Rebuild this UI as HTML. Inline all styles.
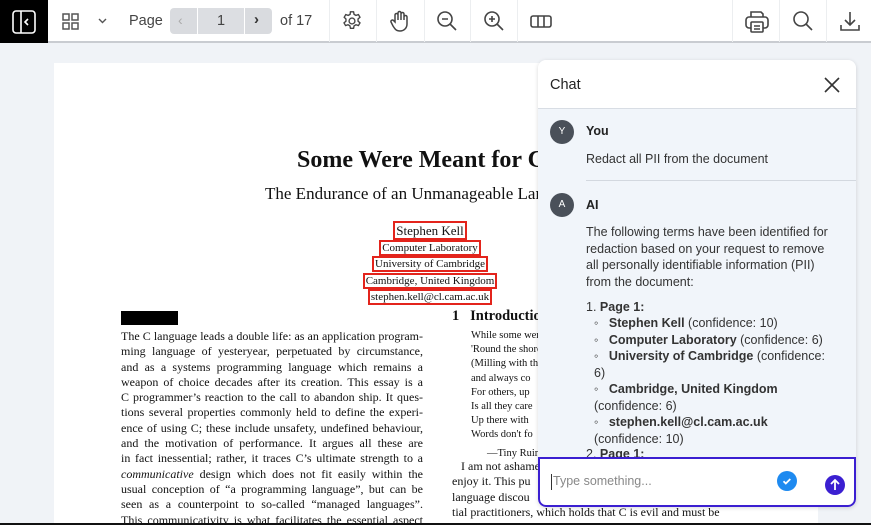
<!DOCTYPE html>
<html><head><meta charset="utf-8"><style>
*{box-sizing:border-box;margin:0;padding:0}
html,body{width:871px;height:525px;overflow:hidden}
body{background:#f0f3f7;font-family:"Liberation Sans",sans-serif;position:relative}
.tb{position:absolute;left:0;top:0;width:871px;height:43px;background:#fff;border-bottom:2px solid #c9ccd1}
.sb{position:absolute;left:0;top:0;width:48px;height:43px;background:#000}
.ic{position:absolute;top:9px}
.sep{position:absolute;top:0;width:1px;height:42px;background:#eceef0}
.pg{position:absolute;left:54px;top:63px;width:764px;height:460px;background:#fff;overflow:hidden}
.serif{font-family:"Liberation Serif",serif;color:#111;position:absolute}
.red{border:2px solid #e3241c;padding:0 1px}
.lc div{font-size:12px;line-height:15.3px;height:15.3px;text-align:justify;text-align-last:justify;white-space:nowrap;overflow:hidden}
.chat{position:absolute;left:538px;top:60px;width:318px;height:447px;background:#f1f5fa;border-radius:8px;box-shadow:0 1px 4px rgba(0,0,0,.15);overflow:hidden;font-size:12.5px;color:#333}
.hd{height:49px;background:#fff;border-bottom:1px solid #d8dde4;padding:17px 12px;font-size:14.5px;color:#222}
.av{position:absolute;width:24px;height:24px;border-radius:12px;background:#4a5059;color:#fff;font-size:10px;text-align:center;line-height:24px}
.nm{position:absolute;font-weight:bold;font-size:12.5px;color:#222}
.t{position:absolute;left:48px;line-height:16.5px;width:268px;white-space:nowrap}
.inp{position:absolute;left:0;top:397px;width:318px;height:50px;background:#fff;border:2px solid #3b1fd1;border-radius:0 0 8px 8px}
</style></head><body>
<div class="tb">
<div class="sb"><svg class="ic" style="left:12px;top:10px" width="24" height="24" viewBox="0 0 24 24" fill="none" stroke="#fff" stroke-width="1.6"><rect x="1" y="1" width="22" height="22" rx="3"/><line x1="9" y1="1" x2="9" y2="23"/><path d="M16 9l-3 3 3 3"/></svg></div>
<svg class="ic" style="left:62px;top:13px" width="17" height="17" viewBox="0 0 17 17" fill="none" stroke="#555" stroke-width="1.5"><rect x="1" y="1" width="6" height="6"/><rect x="10" y="1" width="6" height="6"/><rect x="1" y="10" width="6" height="6"/><rect x="10" y="10" width="6" height="6"/></svg>
<svg class="ic" style="left:98px;top:18px" width="9" height="6" viewBox="0 0 9 6" fill="none" stroke="#555" stroke-width="1.4"><path d="M1 1l3.5 3.5L8 1"/></svg>
<div style="position:absolute;left:129px;top:13px;font-size:14.5px;color:#444">Page</div>
<div style="position:absolute;left:170px;top:8px;width:102px;height:26px;background:#d9dbdf;border-radius:4px"></div>
<div style="position:absolute;left:197px;top:8px;width:48px;height:26px;background:#dcdee2;border-left:1px solid #fff;border-right:1px solid #fff;text-align:center;line-height:26px;font-size:14.5px;color:#444">1</div>
<div style="position:absolute;left:178px;top:12px;color:#aaa;font-size:14px">‹</div>
<div style="position:absolute;left:254px;top:11px;color:#333;font-size:15px;font-weight:bold">›</div>
<div style="position:absolute;left:280px;top:13px;font-size:14.5px;color:#444">of 17</div>
<div class="sep" style="left:329px"></div>
<svg class="ic" style="left:341px;top:10px" width="22" height="22" viewBox="0 0 24 24" fill="none" stroke="#444" stroke-width="1.5"><circle cx="12" cy="12" r="3.2"/><path d="M10.3 2h3.4l.6 2.8 2 1.1 2.7-.9 1.7 2.9-2.1 1.9v2.4l2.1 1.9-1.7 2.9-2.7-.9-2 1.1-.6 2.8h-3.4l-.6-2.8-2-1.1-2.7.9-1.7-2.9 2.1-1.9V9.8L3.5 7.9l1.7-2.9 2.7.9 2-1.1z"/></svg>
<div class="sep" style="left:376px"></div>
<svg class="ic" style="left:387px;top:9px" width="24" height="24" viewBox="0 0 24 24" fill="none" stroke="#444" stroke-width="1.5"><path d="M8 13V6a1.5 1.5 0 013 0v5V4a1.5 1.5 0 013 0v7V5a1.5 1.5 0 013 0v6V8a1.5 1.5 0 013 0v7c0 4-3 7-7 7s-5-2-7-5l-2-4a1.5 1.5 0 012.5-1.5z"/></svg>
<div class="sep" style="left:424px"></div>
<svg class="ic" style="left:436px;top:10px" width="22" height="22" viewBox="0 0 22 22" fill="none" stroke="#444" stroke-width="1.6"><circle cx="9" cy="9" r="7"/><path d="M6 9h6M14 14l6 6"/></svg>
<div class="sep" style="left:470px"></div>
<svg class="ic" style="left:483px;top:10px" width="22" height="22" viewBox="0 0 22 22" fill="none" stroke="#444" stroke-width="1.6"><circle cx="9" cy="9" r="7"/><path d="M6 9h6M9 6v6M14 14l6 6"/></svg>
<div class="sep" style="left:517px"></div>
<svg class="ic" style="left:530px;top:15px" width="22" height="13" viewBox="0 0 22 13" fill="none" stroke="#444" stroke-width="1.6"><rect x="1" y="1" width="20" height="11" rx="2"/><path d="M8 1v11M14 1v11"/></svg>
<div class="sep" style="left:732px"></div>
<svg class="ic" style="left:744px;top:10px" width="26" height="24" viewBox="0 0 26 24" fill="none" stroke="#444" stroke-width="1.6"><path d="M7 7V2h10l2 2v3"/><rect x="2" y="7" width="22" height="11" rx="3"/><rect x="7" y="12" width="12" height="10" rx="1" fill="#fff"/><path d="M10 16h6M10 19h6"/></svg>
<div class="sep" style="left:779px"></div>
<svg class="ic" style="left:792px;top:10px" width="22" height="22" viewBox="0 0 22 22" fill="none" stroke="#444" stroke-width="1.6"><circle cx="9" cy="9" r="7"/><path d="M14 14l6 6"/></svg>
<div class="sep" style="left:826px"></div>
<svg class="ic" style="left:839px;top:10px" width="22" height="22" viewBox="0 0 22 22" fill="none" stroke="#444" stroke-width="1.6"><path d="M11 2v13M6 10l5 5 5-5M2 15v5h18v-5"/></svg>
</div>

<div class="pg">
<div class="serif" style="left:243px;top:84px;font-size:24px;font-weight:bold;white-space:nowrap">Some Were Meant for C</div>
<div class="serif" style="left:211px;top:121px;font-size:17px;white-space:nowrap">The Endurance of an Unmanageable Language</div>
<div class="serif" style="left:238px;top:160px;width:276px;text-align:center;font-size:12px;line-height:15.5px">
<span class="red" style="font-size:13px">Stephen Kell</span><br><span class="red" style="font-size:11px">Computer Laboratory</span><br><span class="red" style="font-size:11px">University of Cambridge</span><br><span class="red" style="font-size:11px">Cambridge, United Kingdom</span><br><span class="red" style="font-size:11px">stephen.kell@cl.cam.ac.uk</span></div>
<div style="position:absolute;left:67px;top:248px;width:57px;height:14px;background:#000"></div>
<div class="serif lc" style="left:67px;top:266px;width:302px">
<div>The C language leads a double life: as an application program-</div>
<div>ming language of yesteryear, perpetuated by circumstance,</div>
<div>and as a systems programming language which remains a</div>
<div>weapon of choice decades after its creation. This essay is a</div>
<div>C programmer’s reaction to the call to abandon ship. It ques-</div>
<div>tions several properties commonly held to define the experi-</div>
<div>ence of using C; these include unsafety, undefined behaviour,</div>
<div>and the motivation of performance. It argues all these are</div>
<div>in fact inessential; rather, it traces C’s ultimate strength to a</div>
<div><i>communicative</i> design which does not fit easily within the</div>
<div>usual conception of “a programming language”, but can be</div>
<div>seen as a counterpoint to so-called “managed languages”.</div>
<div>This communicativity is what facilitates the essential aspect</div>
</div>
<div class="serif" style="left:398px;top:245px;font-size:14.5px;font-weight:bold;white-space:nowrap">1&nbsp;&nbsp;&nbsp;Introduction</div>
<div class="serif" style="left:417px;top:266px;font-size:10.5px;line-height:14.2px;white-space:nowrap">While some were meant for sea<br>'Round the shore<br>(Milling with the<br>and always co<br>For others, up<br>Is all they care<br>Up there with<br>Words don't fo<br><span style="padding-left:16px;line-height:22px">—Tiny Ruins</span></div>
<div class="serif" style="left:398px;top:396px;font-size:12px;line-height:15.3px;white-space:nowrap">&nbsp;&nbsp;&nbsp;I am not ashamed<br>enjoy it. This pu<br>language discou<br>tial practitioners, which holds that C is evil and must be</div>
</div>
<div style="position:absolute;left:0;top:523px;width:871px;height:2px;background:#111"></div>

<div class="chat">
<div class="hd">Chat</div>
<svg style="position:absolute;left:286px;top:17px" width="16" height="16" viewBox="0 0 16 16" stroke="#333" stroke-width="1.6"><path d="M1 1l14 14M15 1L1 15"/></svg>
<div class="av" style="left:12px;top:60px">Y</div><div class="nm" style="left:48px;top:64px">You</div>
<div class="t" style="top:91px">Redact all PII from the document</div>
<div style="position:absolute;left:48px;top:120px;width:270px;height:1px;background:#d3d8df"></div>
<div class="av" style="left:12px;top:133px">A</div><div class="nm" style="left:48px;top:138px">AI</div>
<div class="t" style="top:164px">The following terms have been identified for<br>redaction based on your request to remove<br>all personally identifiable information (PII)<br>from the document:</div>
<div class="t" style="top:239px">1. <b>Page 1:</b></div>
<div class="t" style="top:255px;left:56px;width:250px">
<div>◦&nbsp;&nbsp;&nbsp;<b>Stephen Kell</b> (confidence: 10)</div>
<div>◦&nbsp;&nbsp;&nbsp;<b>Computer Laboratory</b> (confidence: 6)</div>
<div>◦&nbsp;&nbsp;&nbsp;<b>University of Cambridge</b> (confidence:<br>6)</div>
<div>◦&nbsp;&nbsp;&nbsp;<b>Cambridge, United Kingdom</b><br>(confidence: 6)</div>
<div>◦&nbsp;&nbsp;&nbsp;<b>stephen.kell@cl.cam.ac.uk</b><br>(confidence: 10)</div>
</div>
<div class="t" style="top:386px">2. <b>Page 1:</b></div>
<div class="inp">
<div style="position:absolute;left:11px;top:15px;width:1px;height:16px;background:#333"></div>
<div style="position:absolute;left:13px;top:15px;font-size:12.5px;color:#888">Type something...</div>
<div style="position:absolute;left:237px;top:12px;width:20px;height:20px;border-radius:10px;background:#1e8af0"><svg width="20" height="20" viewBox="0 0 20 20" fill="none" stroke="#fff" stroke-width="1.8"><path d="M6.5 10.2l2.3 2.3 4.5-4.5"/></svg></div>
<div style="position:absolute;left:285px;top:16px;width:20px;height:20px;border-radius:10px;background:#3b1fd1"><svg width="20" height="20" viewBox="0 0 20 20" fill="none" stroke="#fff" stroke-width="1.8"><path d="M10 15V5M6 9l4-4 4 4"/></svg></div>
</div>
</div>
</body></html>
